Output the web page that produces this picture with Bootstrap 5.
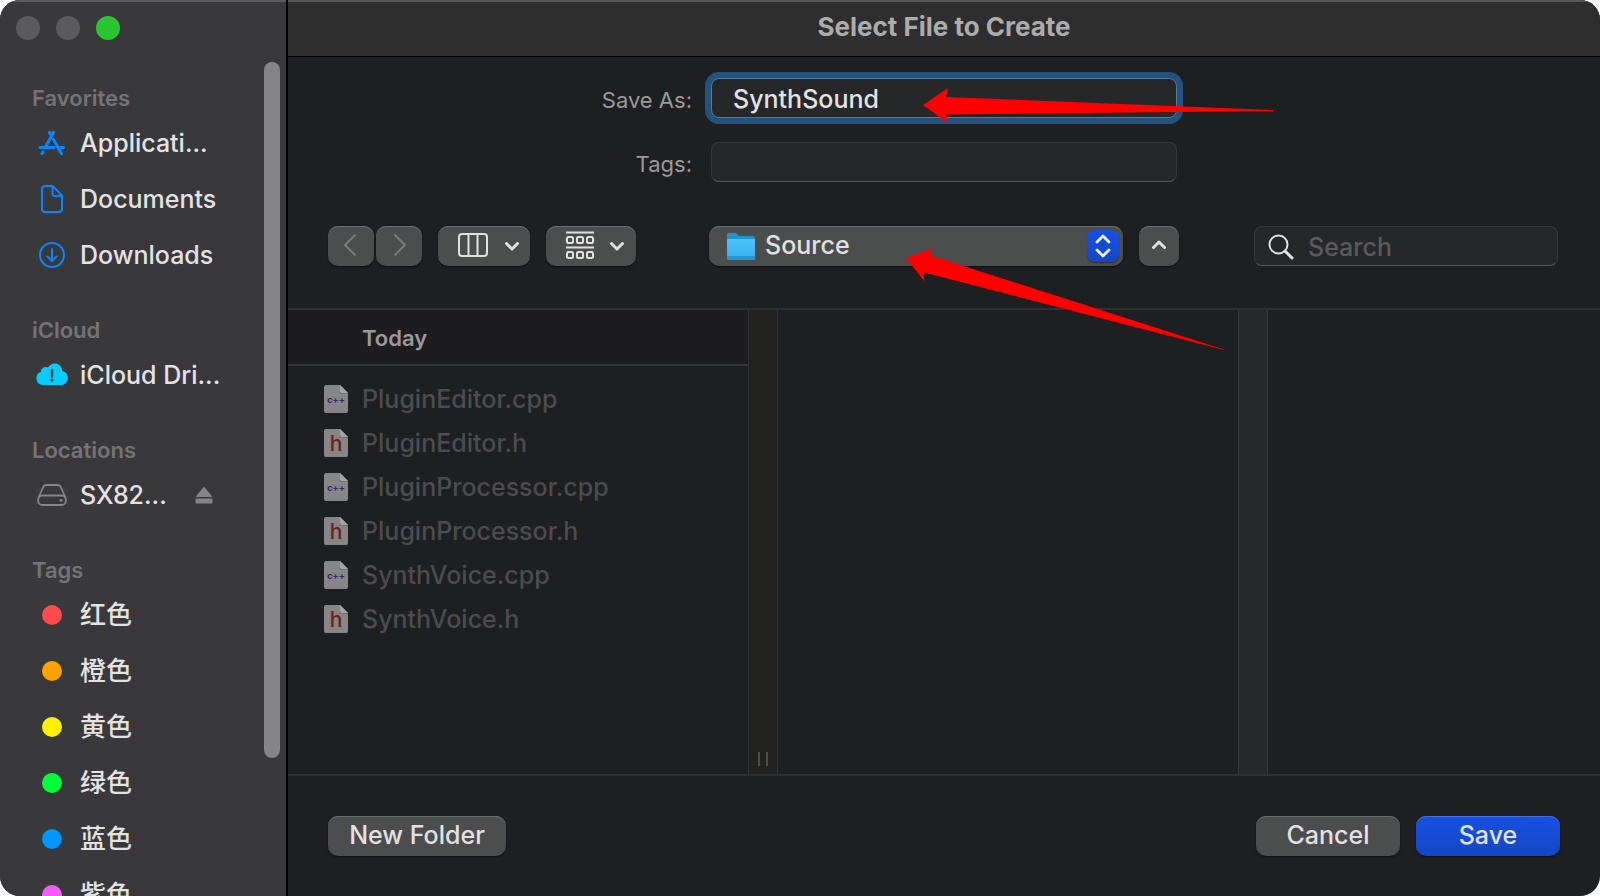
<!DOCTYPE html>
<html lang="en" data-bs-theme="dark">
<head>
<meta charset="utf-8">
<meta name="viewport" content="width=device-width, initial-scale=1">
<title>Select File to Create</title>
<link href="https://cdn.jsdelivr.net/npm/bootstrap@5.3.0/dist/css/bootstrap.min.css" rel="stylesheet">
<style>
  body { background: #fff; font-family: Inter, "Noto Sans CJK SC", sans-serif; font-size: 25px; font-weight: 500; line-height: 32px; color: #e3e3e4; }
  .dialog { background: #1e1f21; border-radius: 20px; box-shadow: inset 0 2px #575757; }
  .sidebar { width: 288px; background: #39393b; border-right: 2px solid #000; box-shadow: inset 0 2px #5c5c5e; }
  .lights { height: 81px; padding: 16px; gap: 16px; }
  .light { width: 24px; height: 24px; border-radius: 50%; background: #5b5b5d; border: 0; padding: 0; }
  .light-zoom { background: #2bc433; }
  .side-group { margin-bottom: 30px; }
  .side-title { font-size: 22px; line-height: 34px; font-weight: 600; color: #747476; margin: 0; padding-left: 32px; }
  .side-item { height: 56px; padding-left: 32px; color: inherit; text-decoration: none; }
  .side-tag { font-size: 26px; }
  .side-icon { width: 40px; margin-right: 8px; }
  .eject { margin-left: 28px; }
  .dot { width: 20px; height: 20px; border-radius: 50%; }
  .thumb { width: 16px; height: 696px; top: 62px; right: 6px; border-radius: 8px; background: #858587; }
  .titlebar { height: 57px; background: #2e2e2e; border-bottom: 1px solid #000; color: #acacac; font-size: 26px; font-weight: 700; box-shadow: inset 0 2px #575757; padding-bottom: 2px; margin: 0; }
  .trio { display: grid; grid-template-columns: 1fr auto 1fr; padding: 0 40px; column-gap: 19px; align-items: center; }
  .form-label-mac { font-size: 22px; font-weight: 400; color: #9a9a9b; text-align: right; padding-top: 4px; }
  .field { background: #262729; border: 1px solid #37383a; border-bottom-color: #59595b; border-radius: 8px; height: 40px; color: #e3e3e4; font-size: 25px; font-weight: 500; }
  .field:focus { background: #262729; color: #e3e3e4; }
  .name-field { width: 466px; padding: 2px 21px 0; }
  .ring, .ring:focus { border-color: #587696; box-shadow: 0 0 0 6px #24527f; }
  .arrow { pointer-events: none; overflow: visible; }
  .mac-btn { height: 40px; border: 0; border-radius: 10px; background: #4c4d4d; color: #e1e1e1; box-shadow: inset 0 1px #6c6d6d, 0 1px 2px #0008; font-size: 25px; font-weight: 500; line-height: 32px; padding: 0 0 2px; display: inline-flex; align-items: center; justify-content: center; }
  .w-nav { width: 46px; padding-right: 2px; }
  .w-view { width: 92px; padding-left: 8px; gap: 15px; }
  .w-view.narrow { width: 90px; }
  .w-view svg + svg { margin-top: 2px; }
  .w-up { width: 40px; }
  .w-new { width: 178px; } .w-act { width: 144px; }
  .mac-btn.primary { background: linear-gradient(#1650e2, #1546c4); box-shadow: inset 0 1px #4471e8, 0 1px 2px #0008; }
  .popup { width: 414px; padding: 0 44px 2px 56px; appearance: none; display: block; outline: 0; }
  .folder { left: 17px; top: 6px; pointer-events: none; }
  .stepper { right: 4px; top: 4px; width: 32px; height: 32px; border-radius: 8px; background: linear-gradient(#1650e2, #1546c4); box-shadow: 0 1px 1px #0006; pointer-events: none; }
  .search-box { width: 304px; margin-right: 2px; }
  .search-box input { padding: 2px 12px 0 53px; }
  .search-box input::placeholder { color: #5a5b5d; opacity: 1; }
  .search-box svg { left: 14px; top: 8px; }
  .browser { border-top: 2px solid #2f3032; border-bottom: 2px solid #2f3032; }
  .pane { width: 460px; }
  .gutter { width: 30px; border: solid #303132; border-width: 0 1px; background: #212120; padding-bottom: 8px; gap: 6px; }
  .gutter.wide { background: #272829; border-color: #373839; }
  .grip { width: 2px; height: 14px; background: #4e4e4e; }
  .group-head { font-size: 22px; line-height: 32px; font-weight: 600; color: #9a9a9b; background: #1d1d1f; border-bottom: 2px solid #333436; padding: 12px 0 10px 74px; margin: 0 0 11px; }
  .file { height: 44px; padding-left: 36px; gap: 14px; color: #4b4c4e; }
  .form-zone { padding-top: 21px; row-gap: 24px; }
  .tool-zone { padding-top: 44px; padding-bottom: 42px; }
  .foot-zone { padding: 40px; }
</style>
</head>
<body>
<svg class="d-none">
  <symbol id="page" viewBox="0 0 24 28"><path d="M2 0h14l8 8v18a2 2 0 0 1-2 2H2a2 2 0 0 1-2-2V2a2 2 0 0 1 2-2z" fill="#868686"/><path d="M16 0l8 8h-6.500a1.500 1.500 0 0 1-1.500-1.500z" fill="#a5a5a5"/><path d="M16 6.500V8.500H24" fill="none" stroke="#6d6d6d" stroke-width=".8"/></symbol>
  <symbol id="chev" viewBox="0 0 16 10"><path d="M2.500 2.500L8 8l5.500-5.500" fill="none" stroke="#e1e1e1" stroke-width="3" stroke-linecap="round" stroke-linejoin="round"/></symbol>
</svg>
<div class="dialog d-flex vh-100 overflow-hidden">
  <aside class="sidebar flex-shrink-0 position-relative overflow-hidden">
    <div class="lights d-flex align-items-start">
      <button class="light" aria-label="Close"></button><button class="light" aria-label="Minimize"></button><button class="light light-zoom" aria-label="Zoom"></button>
    </div>
    <nav>
      <section class="side-group">
        <h2 class="side-title">Favorites</h2>
        <a href="#" class="side-item d-flex align-items-center"><span class="side-icon d-flex justify-content-center"><svg width="28" height="26" viewBox="0 0 28 26" fill="none" stroke="#0d84fb" stroke-width="3.200" stroke-linecap="round"><path d="M11.500 2.500l2 3M15.500 2.500L7.500 17M2 17.500h14M15.500 9.500L23.500 23.500M22 17.500h3.500M5 22l-1 1.500"/></svg></span>Applicati...</a>
        <a href="#" class="side-item d-flex align-items-center"><span class="side-icon d-flex justify-content-center"><svg width="22" height="28" viewBox="0 0 22 28" fill="none" stroke="#0d84fb" stroke-width="2" stroke-linejoin="round"><path d="M4 1h7.500L21 10.500V24a3 3 0 0 1-3 3H4a3 3 0 0 1-3-3V4a3 3 0 0 1 3-3zM11.500 1v8a2 2 0 0 0 2 2H21"/></svg></span>Documents</a>
        <a href="#" class="side-item d-flex align-items-center"><span class="side-icon d-flex justify-content-center"><svg width="26" height="26" viewBox="0 0 26 26" fill="none" stroke="#0d84fb" stroke-width="2" stroke-linecap="round" stroke-linejoin="round"><circle cx="13" cy="13" r="12"/><path d="M13 7v11.500M8.500 14.500l4.500 4.500 4.500-4.500"/></svg></span>Downloads</a>
      </section>
      <section class="side-group">
        <h2 class="side-title">iCloud</h2>
        <a href="#" class="side-item d-flex align-items-center"><span class="side-icon d-flex justify-content-center"><svg width="32" height="24" viewBox="0 0 32 24"><path d="M7 22a6.800 6.800 0 0 1-2-13.200C5 5 9 3 12 4.500 15-1 25-2 26.500 8A7.100 7.100 0 0 1 25 22z" fill="#06cdfd"/><path d="M16 7v6.500" stroke="#39393b" stroke-width="2.400" stroke-linecap="round"/><circle cx="16" cy="17" r="1.600" fill="#39393b"/></svg></span>iCloud Dri...</a>
      </section>
      <section class="side-group">
        <h2 class="side-title">Locations</h2>
        <a href="#" class="side-item d-flex align-items-center"><span class="side-icon d-flex justify-content-center"><svg width="30" height="22" viewBox="0 0 30 22" fill="none" stroke="#858587" stroke-width="1.800"><path d="M1.500 13.500L6 3.500Q7 1 9.500 1h11Q23 1 24 3.500l4.500 10"/><rect x="1" y="11.500" width="28" height="9.500" rx="4.500"/><circle cx="24" cy="16.200" r="1.500" fill="#858587" stroke="none"/></svg></span>SX82...<svg class="eject" width="18" height="18" viewBox="0 0 18 18" fill="#858587"><path d="M9 0.500L17.500 11h-17z"/><rect x="0.500" y="12.500" width="17" height="5" rx=".8"/></svg></a>
      </section>
      <section class="side-group">
        <h2 class="side-title">Tags</h2>
        <a href="#" class="side-item side-tag d-flex align-items-center"><span class="side-icon d-flex justify-content-center"><span class="dot" style="background:#ff4a4c"></span></span>红色</a>
        <a href="#" class="side-item side-tag d-flex align-items-center"><span class="side-icon d-flex justify-content-center"><span class="dot" style="background:#ffa100"></span></span>橙色</a>
        <a href="#" class="side-item side-tag d-flex align-items-center"><span class="side-icon d-flex justify-content-center"><span class="dot" style="background:#fff200"></span></span>黄色</a>
        <a href="#" class="side-item side-tag d-flex align-items-center"><span class="side-icon d-flex justify-content-center"><span class="dot" style="background:#00ff3a"></span></span>绿色</a>
        <a href="#" class="side-item side-tag d-flex align-items-center"><span class="side-icon d-flex justify-content-center"><span class="dot" style="background:#0096ff"></span></span>蓝色</a>
        <a href="#" class="side-item side-tag d-flex align-items-center"><span class="side-icon d-flex justify-content-center"><span class="dot" style="background:#f25cff"></span></span>紫色</a>
      </section>
    </nav>
    <div class="thumb position-absolute"></div>
  </aside>
  <main class="flex-fill d-flex flex-column">
    <h1 class="titlebar d-flex align-items-center justify-content-center">Select File to Create</h1>
    <div class="trio form-zone">
      <label class="form-label-mac" for="saveAs">Save As:</label>
      <div class="position-relative">
        <input id="saveAs" class="form-control field name-field ring" type="text" value="SynthSound">
        <svg class="arrow position-absolute top-0 start-0 z-1" width="466" height="40" viewBox="0 0 466 40"><path d="M212 27L237 10 235 19 562 32v1L235 36.500 237 45z" fill="#fe0000"/></svg>
      </div>
      <span></span>
      <label class="form-label-mac" for="tags">Tags:</label>
      <input id="tags" class="form-control field name-field" type="text">
      <span></span>
    </div>
    <div class="trio tool-zone">
      <div class="d-flex">
        <button class="mac-btn w-nav" aria-label="Back" style="margin-right:2px"><svg width="14" height="24" viewBox="0 0 14 24" fill="none" stroke="#7a7b7b" stroke-width="2" stroke-linecap="round"><path d="M12 2L2 12l10 10"/></svg></button>
        <button class="mac-btn w-nav me-3 ps-1" aria-label="Forward"><svg width="14" height="24" viewBox="0 0 14 24" fill="none" stroke="#7a7b7b" stroke-width="2" stroke-linecap="round"><path d="M2 2l10 10L2 22"/></svg></button>
        <button class="mac-btn w-view me-3" aria-label="Column view"><svg width="32" height="24" viewBox="0 0 32 24" fill="none" stroke="#e1e1e1" stroke-width="2"><rect x="2" y="1" width="28" height="22" rx="3"/><path d="M11.500 1v22M20.500 1v22"/></svg><svg width="16" height="10"><use href="#chev"/></svg></button>
        <button class="mac-btn w-view narrow" aria-label="Group items"><svg width="28" height="28" viewBox="0 0 28 28" fill="none" stroke="#e1e1e1" stroke-width="2"><path d="M0 1.500h28M0 16.500h28"/><rect x="1" y="6" width="6" height="6" rx="1.500"/><rect x="11" y="6" width="6" height="6" rx="1.500"/><rect x="21" y="6" width="6" height="6" rx="1.500"/><rect x="1" y="21" width="6" height="6" rx="1.500"/><rect x="11" y="21" width="6" height="6" rx="1.500"/><rect x="21" y="21" width="6" height="6" rx="1.500"/></svg><svg width="16" height="10"><use href="#chev"/></svg></button>
      </div>
      <div class="d-flex gap-3">
        <div class="position-relative">
          <select class="mac-btn popup" aria-label="Folder"><option>Source</option></select>
          <svg class="folder position-absolute" width="30" height="29" viewBox="0 0 30 29"><defs><linearGradient id="folderFill" x1="0" y1="0" x2="0" y2="1"><stop offset="0" stop-color="#50c3fb"/><stop offset="1" stop-color="#38adec"/></linearGradient></defs><path d="M1 3a2 2 0 0 1 2-2h7l3 3h14a2 2 0 0 1 2 2v8H1z" fill="#1e94cf"/><path d="M1 8a1 1 0 0 1 1-1h26a1 1 0 0 1 1 1v18a2 2 0 0 1-2 2H3a2 2 0 0 1-2-2z" fill="url(#folderFill)"/><path d="M1 24h28v2a2 2 0 0 1-2 2H3a2 2 0 0 1-2-2z" fill="#2596d2"/></svg>
          <span class="stepper position-absolute d-flex align-items-center justify-content-center"><svg width="16" height="24" viewBox="0 0 16 24" fill="none" stroke="#f0f3fd" stroke-width="2.800" stroke-linecap="round" stroke-linejoin="round"><path d="M2 8l6-6 6 6M2 16l6 6 6-6"/></svg></span>
          <svg class="arrow position-absolute top-0 start-0 z-1" width="414" height="40" viewBox="0 0 414 40"><path d="M197 32L225 22 220 29 515 123.500v.5L215 46.500V55z" fill="#fe0000"/></svg>
        </div>
        <button class="mac-btn w-up" aria-label="Collapse"><svg width="16" height="10" viewBox="0 0 16 10" fill="none" stroke="#e1e1e1" stroke-width="3" stroke-linecap="round" stroke-linejoin="round"><path d="M2.500 7.500L8 2l5.500 5.500"/></svg></button>
      </div>
      <div class="search-box position-relative ms-auto">
        <input class="form-control field" type="search" placeholder="Search" aria-label="Search">
        <svg class="position-absolute" width="26" height="26" viewBox="0 0 26 26" fill="none" stroke="#e1e1e1" stroke-linecap="round"><circle cx="10.500" cy="10.500" r="9" stroke-width="2"/><path d="M17 17l7 7" stroke-width="3"/></svg>
      </div>
    </div>
    <div class="browser d-flex flex-fill">
      <div class="pane flex-shrink-0">
        <h2 class="group-head">Today</h2>
        <ul class="list-unstyled mb-0">
          <li class="file d-flex align-items-center"><svg width="24" height="28"><use href="#page"/><text x="12" y="18" text-anchor="middle" font-size="9" font-weight="700" fill="#33265c">c++</text></svg>PluginEditor.cpp</li>
          <li class="file d-flex align-items-center"><svg width="24" height="28"><use href="#page"/><text x="12" y="22" text-anchor="middle" font-size="21" fill="#6f1d24">h</text></svg>PluginEditor.h</li>
          <li class="file d-flex align-items-center"><svg width="24" height="28"><use href="#page"/><text x="12" y="18" text-anchor="middle" font-size="9" font-weight="700" fill="#33265c">c++</text></svg>PluginProcessor.cpp</li>
          <li class="file d-flex align-items-center"><svg width="24" height="28"><use href="#page"/><text x="12" y="22" text-anchor="middle" font-size="21" fill="#6f1d24">h</text></svg>PluginProcessor.h</li>
          <li class="file d-flex align-items-center"><svg width="24" height="28"><use href="#page"/><text x="12" y="18" text-anchor="middle" font-size="9" font-weight="700" fill="#33265c">c++</text></svg>SynthVoice.cpp</li>
          <li class="file d-flex align-items-center"><svg width="24" height="28"><use href="#page"/><text x="12" y="22" text-anchor="middle" font-size="21" fill="#6f1d24">h</text></svg>SynthVoice.h</li>
        </ul>
      </div>
      <div class="gutter flex-shrink-0 d-flex align-items-end justify-content-center"><span class="grip"></span><span class="grip"></span></div>
      <div class="pane flex-shrink-0"></div>
      <div class="gutter wide flex-shrink-0"></div>
      <div class="flex-fill"></div>
    </div>
    <footer class="foot-zone d-flex gap-3">
      <button class="mac-btn w-new me-auto">New Folder</button>
      <button class="mac-btn w-act">Cancel</button>
      <button class="mac-btn primary w-act">Save</button>
    </footer>
  </main>
</div>
<script src="https://cdn.jsdelivr.net/npm/bootstrap@5.3.0/dist/js/bootstrap.bundle.min.js"></script>
</body>
</html>
